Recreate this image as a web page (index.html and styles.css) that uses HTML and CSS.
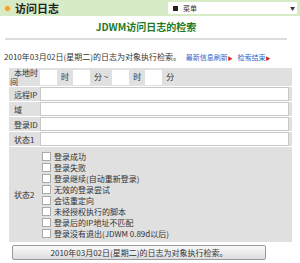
FILE: index.html
```html
<!DOCTYPE html>
<html lang="zh">
<head>
    <meta charset="UTF-8">
    <title>访问日志</title>
    <link rel="stylesheet" href="styles.css">
</head>
<body>
<div class="cabecera">
    <span class="icono"></span>
    <span class="titulo">访问日志</span>
    <div class="menu">
        <span class="cuadro"></span>菜单
        <span class="flecha">▼</span>
    </div>
</div>

<h1 class="titulo-pagina">JDWM访问日志的检索</h1>

<p class="aviso">2010年03月02日(星期二)的日志为对象执行检索。
    <a href="#" class="enlace">最新信息刷新<span class="tri">▶</span></a>
    <a href="#" class="enlace">检索结束<span class="tri">▶</span></a>
</p>

<table class="busqueda">
    <tr class="fila-hora">
        <th>本地时间</th>
        <td>
            <div class="horas">
                <span class="caja"></span>时
                <span class="caja"></span>分 ~
                <span class="caja"></span>时
                <span class="caja"></span>分
            </div>
        </td>
    </tr>
    <tr>
        <th>远程IP</th>
        <td><span class="campo"></span></td>
    </tr>
    <tr>
        <th>域</th>
        <td><span class="campo"></span></td>
    </tr>
    <tr>
        <th>登录ID</th>
        <td><span class="campo"></span></td>
    </tr>
    <tr>
        <th>状态1</th>
        <td><span class="campo"></span></td>
    </tr>
    <tr>
        <th>状态2</th>
        <td class="estados">
            <label><span class="check"></span>登录成功</label>
            <label><span class="check"></span>登录失败</label>
            <label><span class="check"></span>登录继续(自动重新登录)</label>
            <label><span class="check"></span>无效的登录尝试</label>
            <label><span class="check"></span>会话重定向</label>
            <label><span class="check"></span>未经授权执行的脚本</label>
            <label><span class="check"></span>登录后的IP地址不匹配</label>
            <label><span class="check"></span>登录没有退出(JDWM 0.89d以后)</label>
        </td>
    </tr>
</table>

<div class="boton">2010年03月02日(星期二)的日志为对象执行检索。</div>
</body>
</html>
```

FILE: styles.css
```css
body {
    margin: 0;
    font-family: "Noto Sans CJK SC", "Liberation Sans", sans-serif;
    font-size: 8px;
    line-height: 10px;
    color: #333;
}

.cabecera {
    display: flex;
    align-items: center;
    height: 16px;
    padding: 0 3px 0 4px;
    background-color: #d6ebc6;
}

.icono {
    width: 5px;
    height: 5px;
    border-radius: 50%;
    background-color: #f0a030;
    border: 1px solid #fce2a0;
    margin-right: 4px;
}

.titulo {
    font-size: 11px;
    font-weight: bold;
    color: #222;
}

.menu {
    display: flex;
    align-items: center;
    margin-left: auto;
    width: 122px;
    height: 12px;
    padding: 0 2px 0 5px;
    background-color: #fff;
    font-size: 7px;
}

.cuadro {
    width: 5px;
    height: 5px;
    background-color: #222;
    margin-right: 5px;
}

.flecha {
    margin-left: auto;
    font-size: 5px;
}

.titulo-pagina {
    margin: 0 13px 0 5px;
    padding: 5px 0 5px;
    line-height: 12px;
    text-align: center;
    font-size: 10px;
    color: #1f7a1f;
    border-bottom: 2px solid #ddd;
}

.aviso {
    margin: 12px 4px 5px;
    white-space: nowrap;
}

.enlace {
    color: #2f68c8;
    text-decoration: none;
    font-size: 7px;
    margin-left: 3px;
}

.tri {
    color: #d02020;
    font-size: 5px;
}

.busqueda {
    margin-left: 9px;
    width: 283px;
    border-collapse: collapse;
    background-color: #e0e0e0;
}

.busqueda th {
    width: 29px;
    padding: 0 1px;
    text-indent: 4px;
    font-weight: normal;
    text-align: left;
    vertical-align: middle;
    line-height: 9px;
    border-bottom: 1px solid #fff;
}

.busqueda td {
    height: 14px;
    padding: 0 3px 0 0;
    border-bottom: 1px solid #fff;
}

.fila-hora td {
    height: 17px;
}

.horas {
    display: flex;
    align-items: center;
    gap: 4px;
}

.caja {
    width: 17px;
    height: 15px;
    background-color: #fff;
}

.campo {
    display: block;
    height: 12px;
    background-color: #fff;
    border: 1px solid #c8c8c8;
}

.busqueda .estados {
    padding: 4px 0 3px 2px;
}

.estados label {
    display: flex;
    align-items: center;
    height: 11px;
}

.check {
    width: 7px;
    height: 7px;
    background-color: #fff;
    border: 1px solid #aaa;
    margin-right: 3px;
}

.boton {
    margin: 2px 0 0 12px;
    width: 252px;
    height: 13px;
    line-height: 13px;
    text-align: center;
    border: 1px solid #999;
    border-radius: 2px;
    background: linear-gradient(#fafafa, #dcdcdc);
}
```
